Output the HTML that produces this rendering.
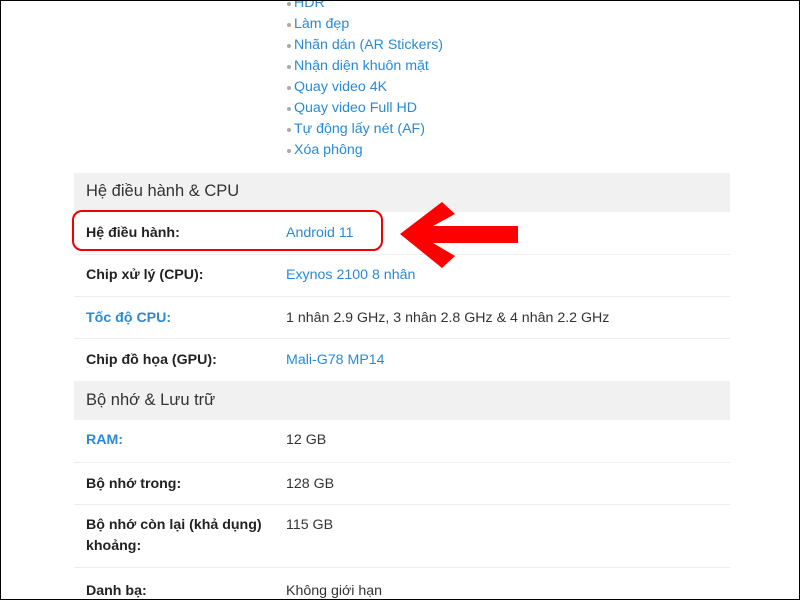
<!DOCTYPE html>
<html><head><meta charset="utf-8"><style>
*{margin:0;padding:0;box-sizing:border-box}
body{width:800px;height:600px;overflow:hidden;background:#fff;font-family:"Liberation Sans",Arial,sans-serif;font-size:14px;color:#333;position:relative}
.frame{position:absolute;left:0;top:0;width:800px;height:600px;border:1px solid #000;z-index:5;pointer-events:none}
.li{position:absolute;left:294px;color:#288ad6;font-size:14.2px;line-height:21px}
.li:before{content:"";position:absolute;left:-7px;top:9px;width:4px;height:4px;border-radius:50%;background:#aaa}
.hd{position:absolute;left:74px;width:656px;background:#f1f1f1;font-size:16.5px;color:#333;padding-left:12px}
.row{position:absolute;left:74px;width:656px;border-bottom:1px solid #eee}
.k{position:absolute;left:12px;font-weight:bold;color:#222;font-size:14.2px;line-height:21px}
.v{position:absolute;left:212px;color:#333;font-size:14.2px;line-height:21px}
.b{color:#288ad6}
</style></head><body>
<div class="frame"></div>
<div class="li" style="top:-7px">HDR</div>
<div class="li" style="top:14px">Làm đẹp</div>
<div class="li" style="top:35px">Nhãn dán (AR Stickers)</div>
<div class="li" style="top:56px">Nhận diện khuôn mặt</div>
<div class="li" style="top:77px">Quay video 4K</div>
<div class="li" style="top:98px">Quay video Full HD</div>
<div class="li" style="top:119px">Tự động lấy nét (AF)</div>
<div class="li" style="top:140px">Xóa phông</div>

<div class="hd" style="top:173px;height:39px;line-height:37px">Hệ điều hành &amp; CPU</div>
<div class="row" style="top:212px;height:43px"><div class="k" style="top:11px">Hệ điều hành:</div><div class="v b" style="top:11px">Android 11</div></div>
<div class="row" style="top:255px;height:42px"><div class="k" style="top:10px">Chip xử lý (CPU):</div><div class="v b" style="top:10px">Exynos 2100 8 nhân</div></div>
<div class="row" style="top:297px;height:42px"><div class="k b" style="top:11px">Tốc độ CPU:</div><div class="v" style="top:11px">1 nhân 2.9 GHz, 3 nhân 2.8 GHz &amp; 4 nhân 2.2 GHz</div></div>
<div class="row" style="top:339px;height:42px;border:none"><div class="k" style="top:11px">Chip đồ họa (GPU):</div><div class="v b" style="top:11px">Mali-G78 MP14</div></div>

<div class="hd" style="top:381px;height:39px;line-height:39px">Bộ nhớ &amp; Lưu trữ</div>
<div class="row" style="top:420px;height:43px"><div class="k b" style="top:10px">RAM:</div><div class="v" style="top:10px">12 GB</div></div>
<div class="row" style="top:463px;height:42px"><div class="k" style="top:11px">Bộ nhớ trong:</div><div class="v" style="top:11px">128 GB</div></div>
<div class="row" style="top:505px;height:63px"><div class="k" style="top:10px">Bộ nhớ còn lại (khả dụng)<br>khoảng:</div><div class="v" style="top:10px">115 GB</div></div>
<div class="row" style="top:568px;height:40px;border:none"><div class="k" style="top:13px">Danh bạ:</div><div class="v" style="top:13px">Không giới hạn</div></div>

<div style="position:absolute;left:72px;top:210px;width:311px;height:41px;border:2px solid #e00;border-radius:10px"></div>
<svg style="position:absolute;left:0;top:0" width="800" height="600"><polygon fill="#ff0000" points="400,234 442,202 455,214 433,226 518,226 518,243 433,243 455,256 442,268"/></svg>
</body></html>
